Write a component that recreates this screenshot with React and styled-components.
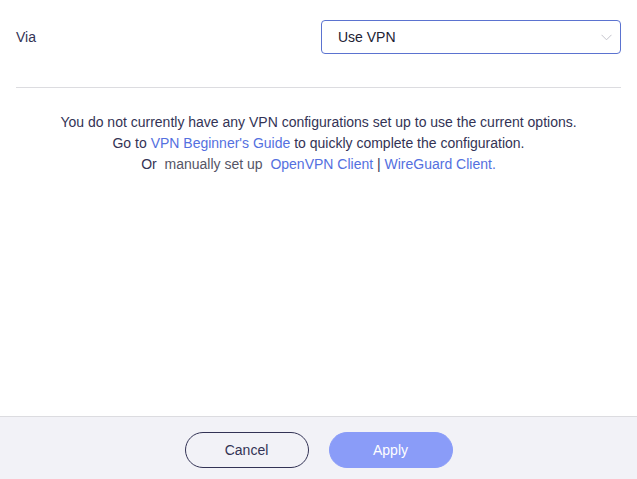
import React, { useState } from 'react';
import styled, { createGlobalStyle } from 'styled-components';

const GlobalStyle = createGlobalStyle`
    html, body {
        margin: 0;
        padding: 0;
        height: 100%;
    }
    body {
        font-family: 'Liberation Sans', Arial, sans-serif;
        background: #ffffff;
        color: #333355;
    }
    #root {
        height: 100%;
    }
`

const App = () => {
    const [via] = useState('Use VPN')

    return (
        <>
            <GlobalStyle />
            <Page>
                <Content>
                    <Row>
                        <Label>Via</Label>
                        <Select>
                            <SelectText>{via}</SelectText>
                            <Chevron width="11" height="7" viewBox="0 0 11 7">
                                <path d="M0.5 0.8 L5.5 5.8 L10.5 0.8" fill="none" stroke="#c4c4cc" strokeWidth="1" />
                            </Chevron>
                        </Select>
                    </Row>
                    <Divider />
                    <Notice>
                        <Line>You do not currently have any VPN configurations set up to use the current options.</Line>
                        <Line>Go to <Link>VPN Beginner's Guide</Link> to quickly complete the configuration.</Line>
                        <Line>Or&nbsp; <Muted>manually set up</Muted>&nbsp; <Link>OpenVPN Client</Link> | <Link>WireGuard Client.</Link></Line>
                    </Notice>
                </Content>
                <Footer>
                    <Button>Cancel</Button>
                    <Button primary>Apply</Button>
                </Footer>
            </Page>
        </>
    );
}

export default App;

const Page = styled.div`
    height: 100%;
    display: flex;
    flex-direction: column;
`

const Content = styled.div`
    flex: 1;
    padding: 20px 16px 0 16px;
`

const Row = styled.div`
    display: flex;
    align-items: center;
    justify-content: space-between;
    height: 34px;
`

const Label = styled.span`
    font-size: 14px;
    color: #333355;
`

const Select = styled.div`
    box-sizing: border-box;
    width: 300px;
    height: 34px;
    border: 1px solid #5b73d0;
    border-radius: 4px;
    display: flex;
    align-items: center;
    justify-content: space-between;
    padding: 0 8px 0 16px;
    cursor: pointer;
`

const SelectText = styled.span`
    font-size: 14px;
    color: #222233;
`

const Chevron = styled.svg`
    display: block;
`

const Divider = styled.div`
    height: 1px;
    background: #dcdce0;
    margin-top: 33px;
`

const Notice = styled.div`
    margin-top: 24px;
    text-align: center;
    font-size: 14px;
    line-height: 21px;
    color: #333355;
`

const Line = styled.div`
    white-space: pre;
`

const Link = styled.a`
    color: #5470e0;
    cursor: pointer;
`

const Muted = styled.span`
    color: #555566;
`

const Footer = styled.div`
    box-sizing: border-box;
    height: 63px;
    background: #f2f2f7;
    border-top: 1px solid #dcdce0;
    display: flex;
    justify-content: center;
    align-items: flex-start;
    gap: 20px;
    padding-top: 15px;
`

const Button = styled.button`
    box-sizing: border-box;
    width: 124px;
    height: 36px;
    border-radius: 18px;
    font-family: 'Liberation Sans', Arial, sans-serif;
    font-size: 14px;
    cursor: pointer;
    border: 1px solid ${props => props.primary ? '#8a9cf8' : '#333355'};
    background: ${props => props.primary ? '#8a9cf8' : 'transparent'};
    color: ${props => props.primary ? '#ffffff' : '#333355'};
`
